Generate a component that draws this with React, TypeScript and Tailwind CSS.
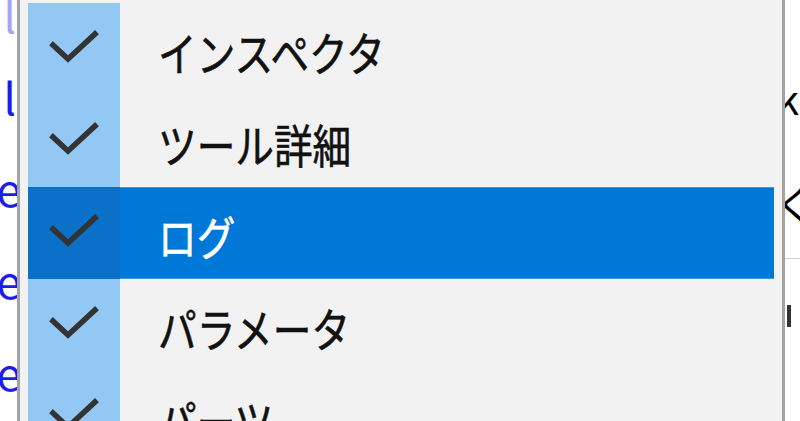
import React from "react";

type Item = { label: string; checked: boolean; active?: boolean };

const items: Item[] = [
  { label: "インスペクタ", checked: true },
  { label: "ツール詳細", checked: true },
  { label: "ログ", checked: true, active: true },
  { label: "パラメータ", checked: true },
  { label: "パーツ", checked: true },
];

// fragments of the page behind the menu, clipped at the menu edges
const leftBits = ["ul", "e", "e", "e"];

function Check() {
  return (
    <svg width="92" height="92" viewBox="0 0 92 92" className="block">
      <polyline
        points="25,42 40,56 67,31"
        fill="none"
        stroke="#333333"
        strokeWidth="5.5"
        strokeLinecap="square"
      />
    </svg>
  );
}

function MenuRow({ item }: { item: Item }) {
  return (
    <div className="flex h-[92px] shrink-0">
      <div
        className={
          item.active
            ? "w-[92px] shrink-0 bg-[#0a70c8]"
            : "w-[92px] shrink-0 bg-[#93c8f4]"
        }
      >
        {item.checked ? <Check /> : null}
      </div>
      <div
        className={
          item.active
            ? "flex-1 flex items-center pl-[38px] bg-[#0078d7] border-y border-[#3d98e2] text-white"
            : "flex-1 flex items-center pl-[38px] text-[#111111]"
        }
      >
        <span className="block origin-left scale-x-[0.84] whitespace-nowrap text-[46px] leading-none pt-[4px] [-webkit-text-stroke:0.6px_currentColor]">
          {item.label}
        </span>
      </div>
    </div>
  );
}

export default function App() {
  return (
    <div
      className="w-[800px] h-[421px] overflow-hidden flex bg-white"
      style={{ fontFamily: '"Noto Sans CJK JP", "Noto Sans", sans-serif' }}
    >
      {/* page behind, left edge */}
      <div className="w-[17px] shrink-0 flex flex-col overflow-hidden text-[44px] leading-none text-[#1c1cf0]">
        <div className="h-[58px] shrink-0 flex items-start justify-end -mt-[8px] opacity-40">
          <span className="mr-[1px]">ul</span>
        </div>
        {leftBits.map((t, i) => (
          <div key={i} className="h-[92px] shrink-0 flex items-center justify-end">
            <span className={t === "e" ? "-mr-[4px]" : "mr-[1px]"}>{t}</span>
          </div>
        ))}
      </div>

      {/* context menu */}
      <div className="w-[768px] shrink-0 flex flex-col bg-[#f2f2f2] border-x-[3px] border-[#a3a3a3] pl-[8px] pr-[8px] pt-[3px]">
        {items.map((it) => (
          <MenuRow key={it.label} item={it} />
        ))}
      </div>

      {/* page behind, right edge */}
      <div className="flex-1 flex flex-col overflow-hidden text-[40px] leading-none text-black">
        <div className="h-[48px] shrink-0" />
        <div className="h-[100px] shrink-0 flex items-center">
          <span className="-ml-[8px]">k</span>
        </div>
        <div className="h-[110px] shrink-0 flex items-center">
          <span className="-ml-[10px]">く</span>
        </div>
        <div className="flex-1 border-t border-[#d0d0d0] pt-[46px] pl-[2px]">
          <div className="w-[4px] h-[22px] bg-[#333333]" />
        </div>
      </div>
    </div>
  );
}
